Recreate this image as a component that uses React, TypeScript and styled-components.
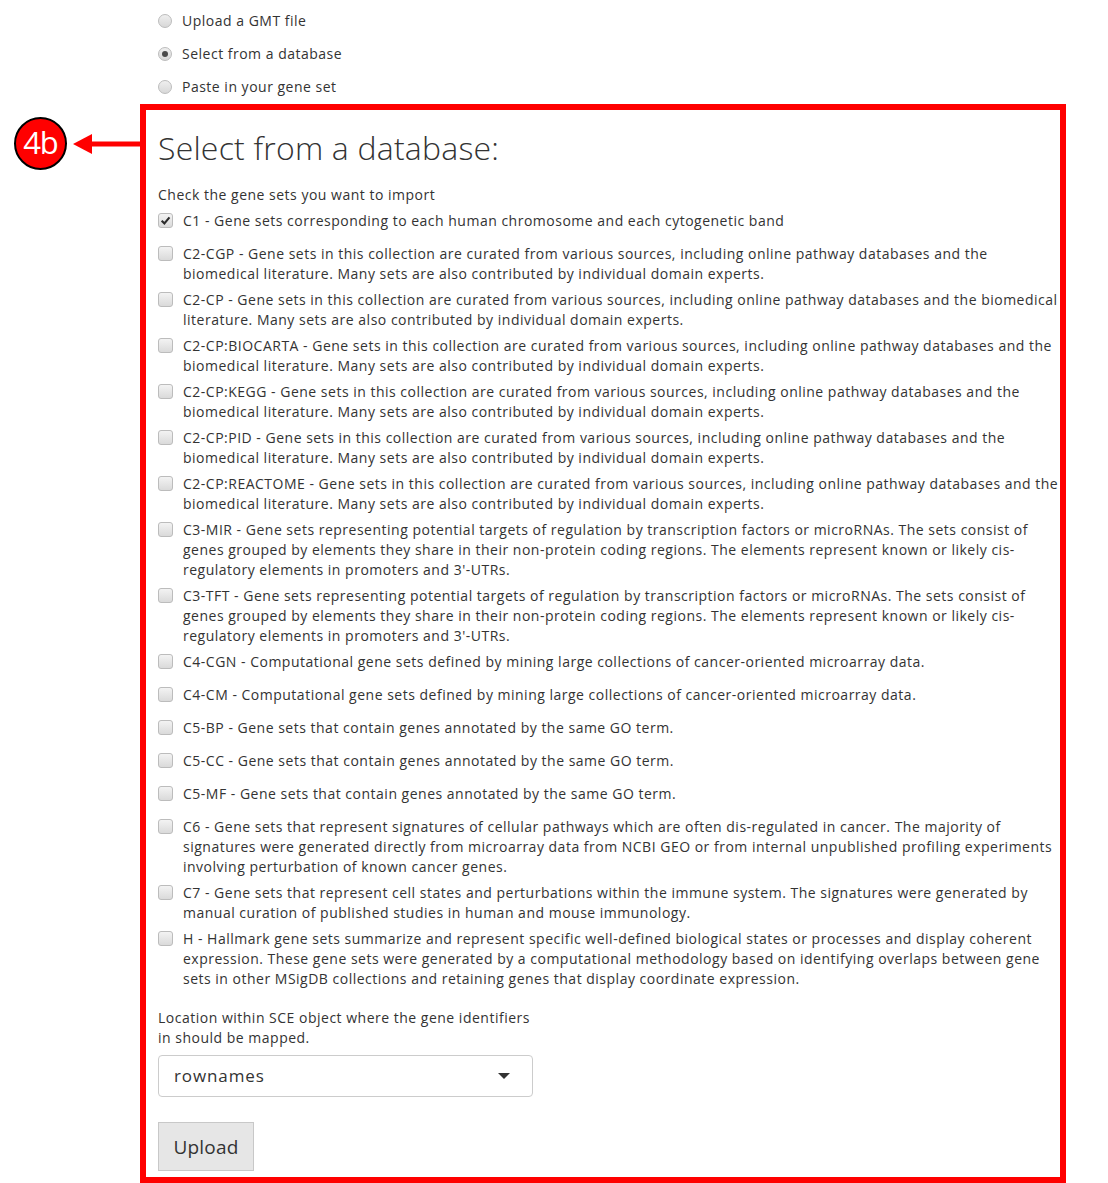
import React from 'react'
import styled, { createGlobalStyle } from 'styled-components'

const GlobalStyle = createGlobalStyle`
    body {
        margin: 0;
        background: #fff;
        font-family: 'Open Sans', 'Liberation Sans', sans-serif;
        color: #333;
        font-size: 14px;
        line-height: 20px;
        letter-spacing: 0.5px;
    }
`

const Page = styled.div`
    width: 1108px;
    height: 1183px;
    overflow: hidden;
`

const RadioGroup = styled.div`
    padding: 11px 0 0 158px;
    display: flex;
    flex-direction: column;
    gap: 13px;
    height: 104px;
    box-sizing: border-box;
`

const RadioRow = styled.label`
    display: flex;
    align-items: center;
    gap: 10px;
    height: 20px;
`

const RadioDot = styled.span<{ $on?: boolean }>`
    width: 14px;
    height: 14px;
    border-radius: 50%;
    border: 1px solid #bcbcbc;
    background: linear-gradient(#efefef, #d8d8d8);
    box-sizing: border-box;
    display: flex;
    align-items: center;
    justify-content: center;
    &::after {
        content: '';
        width: 6px;
        height: 6px;
        border-radius: 50%;
        background: ${(p) => (p.$on ? '#4a4a4a' : 'transparent')};
    }
`

const Row = styled.div`
    display: flex;
    align-items: flex-start;
`

const Callout = styled.div`
    width: 140px;
    flex: none;
    margin-top: 13px;
    display: flex;
    align-items: center;
    padding-left: 14px;
    box-sizing: border-box;
`

const Badge = styled.div`
    width: 53px;
    height: 53px;
    border-radius: 50%;
    background: #ff0000;
    border: 2px solid #000;
    box-sizing: border-box;
    color: #fff;
    font-family: 'Open Sans', 'Liberation Sans', sans-serif;
    font-size: 31px;
    line-height: 1;
    display: flex;
    align-items: center;
    justify-content: center;
    letter-spacing: -1px;
    padding-bottom: 2px;
    flex: none;
`

const Arrow = styled.svg`
    margin-left: 6px;
    flex: none;
`

const Box = styled.div`
    width: 926px;
    height: 1079px;
    border: 6px solid #ff0000;
    box-sizing: border-box;
    padding: 0 0 0 12px;
`

const Heading = styled.h3`
    margin: 16px 0 15px;
    font-size: 32px;
    font-weight: 300;
    line-height: 44px;
    letter-spacing: 0.2px;
    color: #333;
`

const Hint = styled.div`
    margin-top: 0;
`

const CheckList = styled.div`
    display: flex;
    flex-direction: column;
    gap: 6px;
    margin-top: 6px;
`

const CheckRow = styled.label`
    display: flex;
    align-items: flex-start;
    gap: 10px;
    min-height: 27px;
`

const CheckBox = styled.span`
    width: 15px;
    height: 15px;
    margin-top: 2px;
    border-radius: 3px;
    border: 1px solid #bcbcbc;
    background: linear-gradient(#f3f3f3, #dadada);
    box-sizing: border-box;
    flex: none;
    display: flex;
    align-items: center;
    justify-content: center;
`

const CheckText = styled.span`
    width: 876px;
`

const FieldLabel = styled.div`
    width: 376px;
    margin-top: 19px;
`

const SelectBox = styled.div`
    width: 375px;
    height: 42px;
    margin-top: 7px;
    border: 1px solid #ccc;
    border-radius: 4px;
    box-sizing: border-box;
    display: flex;
    align-items: center;
    justify-content: space-between;
    padding: 0 22px 0 15px;
    font-size: 17px;
    letter-spacing: 0.9px;
    color: #333;
`

const Caret = styled.span`
    width: 0;
    height: 0;
    border-left: 6px solid transparent;
    border-right: 6px solid transparent;
    border-top: 6px solid #333;
`

const UploadButton = styled.button`
    margin-top: 25px;
    width: 96px;
    height: 49px;
    background: #e6e6e6;
    border: 1px solid #c8c8c8;
    border-radius: 0;
    font-family: 'Open Sans', 'Liberation Sans', sans-serif;
    font-size: 19px;
    letter-spacing: 0.2px;
    color: #333;
    padding: 0;
`

const genesets: { on?: boolean; text: string }[] = [
    { on: true, text: 'C1 - Gene sets corresponding to each human chromosome and each cytogenetic band' },
    { text: 'C2-CGP - Gene sets in this collection are curated from various sources, including online pathway databases and the biomedical literature. Many sets are also contributed by individual domain experts.' },
    { text: 'C2-CP - Gene sets in this collection are curated from various sources, including online pathway databases and the biomedical literature. Many sets are also contributed by individual domain experts.' },
    { text: 'C2-CP:BIOCARTA - Gene sets in this collection are curated from various sources, including online pathway databases and the biomedical literature. Many sets are also contributed by individual domain experts.' },
    { text: 'C2-CP:KEGG - Gene sets in this collection are curated from various sources, including online pathway databases and the biomedical literature. Many sets are also contributed by individual domain experts.' },
    { text: 'C2-CP:PID - Gene sets in this collection are curated from various sources, including online pathway databases and the biomedical literature. Many sets are also contributed by individual domain experts.' },
    { text: 'C2-CP:REACTOME - Gene sets in this collection are curated from various sources, including online pathway databases and the biomedical literature. Many sets are also contributed by individual domain experts.' },
    { text: "C3-MIR - Gene sets representing potential targets of regulation by transcription factors or microRNAs. The sets consist of genes grouped by elements they share in their non-protein coding regions. The elements represent known or likely cis-regulatory elements in promoters and 3'-UTRs." },
    { text: "C3-TFT - Gene sets representing potential targets of regulation by transcription factors or microRNAs. The sets consist of genes grouped by elements they share in their non-protein coding regions. The elements represent known or likely cis-regulatory elements in promoters and 3'-UTRs." },
    { text: 'C4-CGN - Computational gene sets defined by mining large collections of cancer-oriented microarray data.' },
    { text: 'C4-CM - Computational gene sets defined by mining large collections of cancer-oriented microarray data.' },
    { text: 'C5-BP - Gene sets that contain genes annotated by the same GO term.' },
    { text: 'C5-CC - Gene sets that contain genes annotated by the same GO term.' },
    { text: 'C5-MF - Gene sets that contain genes annotated by the same GO term.' },
    { text: 'C6 - Gene sets that represent signatures of cellular pathways which are often dis-regulated in cancer. The majority of signatures were generated directly from microarray data from NCBI GEO or from internal unpublished profiling experiments involving perturbation of known cancer genes.' },
    { text: 'C7 - Gene sets that represent cell states and perturbations within the immune system. The signatures were generated by manual curation of published studies in human and mouse immunology.' },
    { text: 'H - Hallmark gene sets summarize and represent specific well-defined biological states or processes and display coherent expression. These gene sets were generated by a computational methodology based on identifying overlaps between gene sets in other MSigDB collections and retaining genes that display coordinate expression.' },
]

function App() {
    return (
        <Page>
            <GlobalStyle />
            <RadioGroup>
                <RadioRow>
                    <RadioDot />
                    Upload a GMT file
                </RadioRow>
                <RadioRow>
                    <RadioDot $on />
                    Select from a database
                </RadioRow>
                <RadioRow>
                    <RadioDot />
                    Paste in your gene set
                </RadioRow>
            </RadioGroup>
            <Row>
                <Callout>
                    <Badge>4b</Badge>
                    <Arrow width="67" height="24" viewBox="0 0 67 24">
                        <polygon points="0,12 19,2 19,22" fill="#ff0000" />
                        <rect x="17" y="9.5" width="50" height="5" fill="#ff0000" />
                    </Arrow>
                </Callout>
                <Box>
                    <Heading>Select from a database:</Heading>
                    <Hint>Check the gene sets you want to import</Hint>
                    <CheckList>
                        {genesets.map((g) => (
                            <CheckRow key={g.text}>
                                <CheckBox>
                                    {g.on && (
                                        <svg width="11" height="11" viewBox="0 0 10 10">
                                            <path d="M1.5 5.2 L4 7.6 L8.6 2.2" stroke="#2b2b2b" strokeWidth="1.9" fill="none" />
                                        </svg>
                                    )}
                                </CheckBox>
                                <CheckText>{g.text}</CheckText>
                            </CheckRow>
                        ))}
                    </CheckList>
                    <FieldLabel>Location within SCE object where the gene identifiers in should be mapped.</FieldLabel>
                    <SelectBox>
                        rownames
                        <Caret />
                    </SelectBox>
                    <UploadButton>Upload</UploadButton>
                </Box>
            </Row>
        </Page>
    )
}

export default App
